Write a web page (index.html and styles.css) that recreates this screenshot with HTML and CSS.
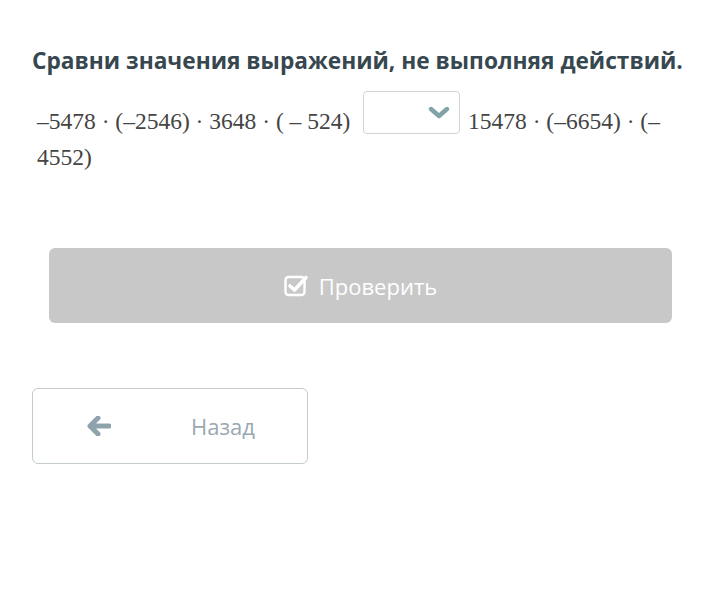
FILE: index.html
```html
<!DOCTYPE html>
<html lang="ru">
<head>
    <meta charset="UTF-8">
    <title>Сравни значения выражений</title>
    <link rel="stylesheet" href="styles.css">
</head>
<body>
    <div class="task">
        <h1 class="title">Сравни значения выражений, не выполняя действий.</h1>
        <p class="expr">
            –5478 · (–2546) · 3648 · ( – 524)
            <span class="select">
                <svg width="22" height="14" viewBox="0 0 22 14"><path d="M3 3 L11 10 L19 3" fill="none" stroke="#7fa3a6" stroke-width="4.4" stroke-linecap="round" stroke-linejoin="round"/></svg>
            </span>
            15478 · (–6654) · (–4552)
        </p>
        <div class="check-row">
            <button class="check-btn">
                <svg width="25" height="23" viewBox="0 0 25 23">
                    <rect x="1.5" y="3" width="19" height="18" rx="3" fill="none" stroke="#fff" stroke-width="2.4"/>
                    <path d="M6 12 L10.5 16 L22 3.5" fill="none" stroke="#fff" stroke-width="3.6" stroke-linecap="round" stroke-linejoin="round"/>
                </svg>
                Проверить
            </button>
        </div>
        <button class="back-btn">
            <svg width="24" height="20" viewBox="0 0 24 20"><path d="M11 2 L3 10 L11 18 M4 10 H22" fill="none" stroke="#8fa3ad" stroke-width="5" stroke-linecap="round" stroke-linejoin="round"/></svg>
            <span>Назад</span>
        </button>
    </div>
</body>
</html>
```

FILE: styles.css
```css
body {
    margin: 0;
    background: #fff;
    font-family: "Open Sans", sans-serif;
}
.task {
    padding: 45px 30px 0 32px;
}
.title {
    margin: 0;
    font-size: 22.7px;
    font-weight: 700;
    color: #37474f;
    line-height: 32px;
    white-space: nowrap;
}
.expr {
    margin: 26px 0 0 5px;
    font-family: "Liberation Serif", serif;
    font-size: 23.5px;
    line-height: 36px;
    color: #444;
}
.select {
    display: inline-flex;
    justify-content: flex-end;
    align-items: center;
    box-sizing: border-box;
    width: 97px;
    height: 43px;
    margin: -10px 2px -10px 7px;
    padding-right: 9px;
    border: 1px solid #cfd4d6;
    border-radius: 4px;
    vertical-align: middle;
    position: relative;
    top: -11px;
}
.check-row {
    padding: 73px 10px 0 17px;
}
.check-btn {
    display: flex;
    justify-content: center;
    align-items: center;
    gap: 10px;
    width: 100%;
    height: 75px;
    border: none;
    border-radius: 6px;
    background: #c8c8c8;
    color: #fff;
    font-family: "Open Sans", sans-serif;
    font-size: 22px;
}
.back-btn {
    display: flex;
    align-items: center;
    margin-top: 65px;
    width: 276px;
    height: 76px;
    padding: 0 0 0 54px;
    border: 1px solid #c4cbce;
    border-radius: 6px;
    background: #fff;
    color: #9aa9b0;
    font-family: "Open Sans", sans-serif;
    font-size: 22px;
}
.back-btn span {
    margin-left: 80px;
}
```
